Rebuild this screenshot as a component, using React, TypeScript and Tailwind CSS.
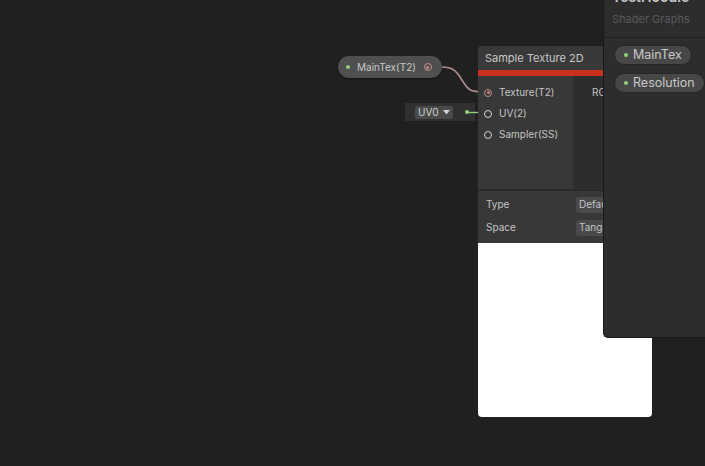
import React from "react";

const font = { fontFamily: "Inter, 'Noto Sans', sans-serif" };

function Port({ color = "#c8c8c8", filled = false }: { color?: string; filled?: boolean }) {
    return (
        <span
            className="flex h-[8px] w-[8px] items-center justify-center rounded-full border"
            style={{ borderColor: color }}
        >
            {filled && <span className="h-[3px] w-[3px] rounded-full" style={{ background: color }} />}
        </span>
    );
}

export default function App() {
    return (
        <div className="relative h-[466px] w-[705px] overflow-hidden bg-[#202020] text-[#c4c4c4]" style={font}>
            {/* MainTex property node */}
            <div className="absolute left-[338px] top-[56px] flex h-[22px] w-[104px] items-center rounded-full bg-[#4f4f4f] pl-[8px] text-[10px] text-[#c8c8c8] shadow-[0_1px_2px_rgba(0,0,0,0.5)]">
                <span className="h-[4px] w-[4px] rounded-full bg-[#8fd17a]" />
                <span className="ml-[7px]">MainTex(T2)</span>
                <span className="ml-[8px]">
                    <Port color="#c98a8a" filled />
                </span>
            </div>

            {/* UV node */}
            <div className="absolute left-[405px] top-[103px] flex h-[18px] w-[70px] items-center bg-[#303030] pl-[10px] text-[10px]">
                <div className="flex h-[13px] items-center gap-[4px] rounded-[2px] bg-[#4a4a4a] px-[3px] text-[#d0d0d0]">
                    <span>UV0</span>
                    <svg width="7" height="5" viewBox="0 0 7 5"><path d="M0 0 H7 L3.5 4.5Z" fill="#d0d0d0" /></svg>
                </div>
                <span className="ml-[12px] h-[4px] w-[4px] rounded-full bg-[#8fd17a]" />
            </div>

            {/* Wires */}
            <svg className="absolute left-0 top-0" width="705" height="466">
                <path d="M442 67 C452 67 456 70 462 80 C468 90 470 92 484 92" stroke="#b08a8a" strokeWidth="1.6" fill="none" />
                <line x1="467" y1="112.5" x2="485" y2="112.5" stroke="#8fd17a" strokeWidth="1.4" />
            </svg>

            {/* Sample Texture 2D node */}
            <div className="absolute left-[478px] top-[46px] w-[174px] text-[10px]">
                <div className="flex h-[24px] items-center rounded-t-[4px] bg-[#393939] pl-[7px] text-[11px] text-[#c8c8c8]">
                    Sample Texture 2D
                </div>
                <div className="h-[6px] bg-[#c9311f]" />
                <div className="flex h-[113px]">
                    <div className="flex w-[95px] flex-col gap-[8px] bg-[#383838] pl-[6px] pt-[10px]">
                        <div className="flex h-[13px] items-center gap-[7px]">
                            <Port color="#c98a8a" filled />
                            <span>Texture(T2)</span>
                        </div>
                        <div className="flex h-[13px] items-center gap-[7px]">
                            <Port color="#d0d0d0" />
                            <span>UV(2)</span>
                        </div>
                        <div className="flex h-[13px] items-center gap-[7px]">
                            <Port color="#d0d0d0" />
                            <span>Sampler(SS)</span>
                        </div>
                    </div>
                    <div className="flex-1 bg-[#2d2d2d] pl-[19px] pt-[10px]">
                        <div className="h-[13px] leading-[13px]">RGBA(4)</div>
                    </div>
                </div>
                <div className="h-[2px] bg-[#2a2a2a]" />
                <div className="flex h-[52px] flex-col gap-[6px] bg-[#383838] pl-[8px] pt-[5px]">
                    <div className="flex h-[17px] items-center">
                        <span className="w-[90px]">Type</span>
                        <span className="flex h-[16px] items-center rounded-[3px] bg-[#4a4a4a] px-[3px]">Default</span>
                    </div>
                    <div className="flex h-[17px] items-center">
                        <span className="w-[90px]">Space</span>
                        <span className="flex h-[16px] items-center rounded-[3px] bg-[#4a4a4a] px-[3px]">Tangent</span>
                    </div>
                </div>
                <div className="h-[174px] rounded-b-[4px] bg-white" />
            </div>

            {/* Blackboard */}
            <div className="absolute left-[603px] top-0 flex h-[338px] w-[102px] flex-col rounded-bl-[5px] border-l border-b border-[#191919] bg-[#2d2d2d]">
                <div className="h-[38px] border-b border-[#1f1f1f] pl-[8px]">
                    <div className="mt-[-13px] text-[14px] leading-[20px] font-semibold text-[#c8c8c8]">TestHoodie</div>
                    <div className="mt-[4px] text-[11px] text-[#5a5a5a]">Shader Graphs</div>
                </div>
                <div className="flex flex-col items-start gap-[8px] pl-[10px] pt-[7px] text-[12.5px] text-[#c8c8c8]">
                    <div className="flex h-[20px] items-center gap-[5px] rounded-full border border-[#262626] bg-[#474747] pl-[9px] pr-[9px]">
                        <span className="h-[4px] w-[4px] rounded-full bg-[#8fd17a]" />
                        <span>MainTex</span>
                    </div>
                    <div className="flex h-[20px] items-center gap-[5px] rounded-full border border-[#262626] bg-[#474747] pl-[9px] pr-[9px]">
                        <span className="h-[4px] w-[4px] rounded-full bg-[#8fd17a]" />
                        <span>Resolution</span>
                    </div>
                </div>
            </div>
        </div>
    );
}
